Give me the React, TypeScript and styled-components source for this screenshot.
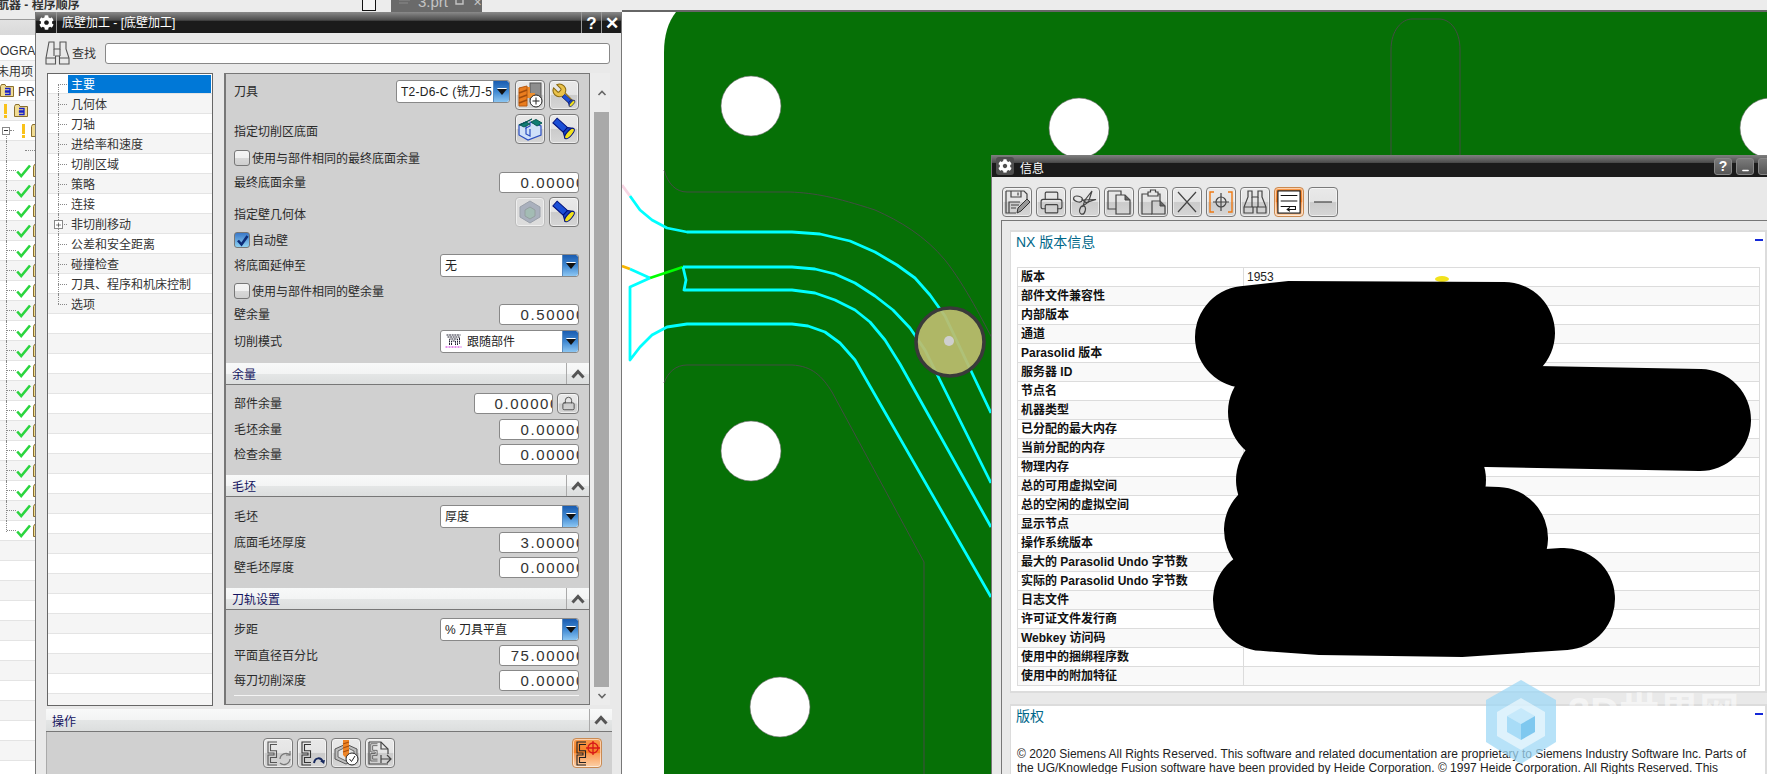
import React from "react";
import styled, { createGlobalStyle } from "styled-components";
import { FaCog } from "react-icons/fa";
import { Printer, Lock, Plus, Minus } from "lucide-react";

const Global = createGlobalStyle`
  html, body { margin: 0; padding: 0; background: #fff; overflow: hidden; }
  * { box-sizing: border-box; }
`;
const FONT = `"Liberation Sans", "Noto Sans CJK SC", sans-serif`;

const Page = styled.div`
  width: 1767px; height: 774px; overflow: hidden; display: flex; flex-direction: column;
  font-family: ${FONT}; font-size: 12px; color: #2a2a2a; background: #fff;
`;
const TopStrip = styled.div`display: flex; height: 12px; flex: none; background: #ececec;`;
const TopLeft = styled.div`width: 622px; display: flex; align-items: flex-start; overflow: hidden;`;
const TopRight = styled.div`flex: 1; border-bottom: 2px solid #666;`;
const AppTitle = styled.div`font-weight: 700; font-size: 12px; line-height: 10px; margin-left: -3px; white-space: nowrap; color: #333; width: 365px;`;
const TinySquare = styled.div`width: 14px; height: 11px; border: 1px solid #111; border-top: none; background: #f4f4f4; flex: none;`;
const PartTab = styled.div`
  margin-left: 15px; width: 91px; height: 12px; background: #6a6a6a; color: #c4c4c4; display: flex; flex: none;
  align-items: flex-start; padding-left: 7px; font-size: 15px; line-height: 4px; overflow: hidden;
`;
const TabName = styled.span`margin: 0 7px 0 5px;`;
const TabClose = styled.span`margin-left: 8px; font-size: 11px; line-height: 5px;`;
const Work = styled.div`flex: 1; display: flex; min-height: 0;`;

/* ---------- navigator ---------- */
const Nav = styled.div`width: 35px; flex: none; overflow: hidden; background: #fff;`;
const NavHead = styled.div`
  height: 29px; background: linear-gradient(#ececec 0, #ececec 7px, #999 7px, #999 8px, #e2e2e2 8px, #d9d9d9 23px, #fff 23px);
`;
const NavRow = styled.div<{ $alt: boolean; $pad?: number; $tree?: boolean; $first?: boolean; $last?: boolean; $gap?: number }>`
  height: 20px; display: flex; align-items: center; white-space: nowrap; position: relative;
  padding-left: ${(p) => p.$pad ?? 0}px; gap: ${(p) => p.$gap ?? 0}px;
  background: ${(p) => (p.$alt ? "#f5f5f5" : "#fff")};
  border-bottom: 1px solid #e4e4e4; color: #333;
  ${(p) => (p.$tree ? `&::after { content: ""; position: absolute; left: 6px; top: ${p.$first ? 10 : 0}px; height: ${p.$last ? 11 : 20}px; border-left: 1px dotted #888; }` : "")}
`;
const NavClip = styled.span`margin-left: -3px;`;
const NavDown = styled.span`padding-top: 3px;`;
const NavGap = styled.span<{ $w: number }>`display: block; width: ${(p) => p.$w}px; flex: none;`;
const NavDash = styled.i<{ $w: number }>`display: block; width: ${(p) => p.$w}px; flex: none; border-top: 1px dotted #888;`;
const Warn = styled.i`display: block; width: 3px; height: 14px; flex: none; background: linear-gradient(#f9c21a 0, #f9c21a 72%, transparent 72%, transparent 80%, #f9c21a 80%);`;
const NavBox = styled.i`display: flex; width: 8px; height: 8px; border: 1px solid #888; background: #fff; flex: none; align-items: center; justify-content: center; position: relative; z-index: 1;`;
const NavBoxBar = styled.i`display: block; width: 4px; height: 1px; background: #333;`;
const PlainSvg = styled.svg`flex: none; display: block;`;

const Folder = () => (
  <PlainSvg width="14" height="13" viewBox="0 0 14 13">
    <path d="M.5 2.5V12.5H13.5V2.5H6L5 .5H1.5Z" fill="#f1dc93" stroke="#8a6f2c" />
    <path d="M5 4.5H10V6.8H5.5V8.2H10V10.5H5" fill="none" stroke="#1720c8" strokeWidth="1.3" />
  </PlainSvg>
);
const Check = () => (
  <PlainSvg width="15" height="14" viewBox="0 0 15 14">
    <path d="M1.2 7.5 L5.2 12 L14 1.5" fill="none" stroke="#2bd53f" strokeWidth="2.6" />
  </PlainSvg>
);

const Navigator = () => {
  const rows: React.ReactNode[] = [];
  for (let i = 0; i < 37; i++) {
    const alt = i % 2 === 1;
    if (i === 0) rows.push(<NavRow key={i} $alt={alt}>OGRA</NavRow>);
    else if (i === 1) rows.push(<NavRow key={i} $alt={alt}><NavClip>未用项</NavClip></NavRow>);
    else if (i === 2) rows.push(<NavRow key={i} $alt={alt} $gap={4}><Folder /><NavDown>PRO</NavDown></NavRow>);
    else if (i === 3) rows.push(<NavRow key={i} $alt={alt} $pad={4} $gap={7}><Warn /><Folder /><span>C</span></NavRow>);
    else if (i === 4) rows.push(<NavRow key={i} $alt={alt} $pad={2} $tree $first><NavBox><NavBoxBar /></NavBox><NavDash $w={4} /><NavGap $w={8} /><Warn /><NavGap $w={6} /><Folder /></NavRow>);
    else if (i === 5) rows.push(<NavRow key={i} $alt={alt} $pad={25} $tree><NavDash $w={10} /></NavRow>);
    else if (i >= 6 && i <= 24) rows.push(<NavRow key={i} $alt={alt} $pad={7} $tree $last={i === 24}><NavDash $w={9} /><Check /><NavGap $w={2} /><Folder /></NavRow>);
    else rows.push(<NavRow key={i} $alt={alt} />);
  }
  return <Nav><NavHead />{rows}</Nav>;
};

/* ---------- dialog shell ---------- */
const Dialog = styled.div`
  width: 587px; flex: none; background: #e9e9e9; border-left: 1px solid #777; border-right: 1px solid #777;
  display: flex; flex-direction: column; overflow: hidden;
`;
const TitleBar = styled.div<{ $h: number }>`
  height: ${(p) => p.$h}px; flex: none; display: flex; align-items: stretch; color: #fff;
  background: linear-gradient(#8a8a8a 0, #4a4a4a 40%, #1b1b1b 42%, #1b1b1b 100%);
`;
const TitleGear = styled.div`width: 21px; display: flex; align-items: center; justify-content: center; border-right: 1px solid #999; flex: none;`;
const TitleText = styled.div`flex: 1; padding: 4px 0 0 5px; font-size: 12px; line-height: 15px;`;
const TitleBtn = styled.div`
  width: 20px; display: flex; align-items: center; justify-content: center; border-left: 1px solid #999;
  font-size: 17px; font-weight: 700; color: #fff; flex: none; padding-top: 2px;
`;
const FindRow = styled.div`height: 40px; flex: none; display: flex; align-items: center; padding: 0 11px 0 9px;`;
const FindLabel = styled.span`margin: 0 9px 2px 2px; font-size: 12px; color: #333;`;
const FindInput = styled.div`flex: 1; height: 21px; background: #fff; border: 1px solid #888; border-radius: 3px;`;
const MainRow = styled.div`height: 633px; flex: none; display: flex; padding-left: 11px; gap: 11px;`;

const Tree = styled.div`width: 166px; flex: none; height: 633px; border: 1px solid #666; background: #f5f5f5; overflow: hidden;`;
const TreeRow = styled.div<{ $alt: boolean; $item: boolean; $first?: boolean; $last?: boolean }>`
  height: 20px; position: relative; padding-left: 20px; display: flex;
  background: ${(p) => (p.$alt ? "#f5f5f5" : "#fff")}; border-bottom: 1px solid #e4e4e4;
  ${(p) => p.$item ? `
    &::before { content: ""; position: absolute; left: 10px; top: 10px; width: 9px; border-top: 1px dotted #888; }
    &::after { content: ""; position: absolute; left: 10px; top: ${p.$first ? 10 : 0}px; height: ${p.$last ? 10 : 20}px; border-left: 1px dotted #888; }
  ` : ""}
`;
const TreeLabel = styled.div<{ $sel?: boolean }>`
  flex: 1; padding: ${(p) => (p.$sel ? "2px" : "3px")} 0 0 3px; line-height: 16px; margin: ${(p) => (p.$sel ? "1px 1px 0 0" : "0")};
  height: ${(p) => (p.$sel ? "18px" : "19px")};
  background: ${(p) => (p.$sel ? "#0078d7" : "transparent")}; color: ${(p) => (p.$sel ? "#fff" : "#333")};
`;
const TreeBox = styled.i`
  position: absolute; left: 6px; top: 6px; width: 9px; height: 9px; border: 1px solid #888; background: #fff;
  z-index: 1; display: flex; align-items: center; justify-content: center;
`;

const Panes = styled.div`width: 386px; flex: none; display: flex;`;
const Pane = styled.div`
  width: 366px; height: 632px; background: #d0d0d0; border: 1px solid #777; border-width: 1px 1px 1px 2px; overflow: hidden;
`;
const ScrollTrack = styled.div`width: 20px; height: 632px; background: #ececec; display: flex; flex-direction: column; align-items: center; padding-left: 3px;`;
const ScrollCap = styled.div<{ $h: number }>`height: ${(p) => p.$h}px; flex: none; display: flex; align-items: center; justify-content: center; color: #555;`;
const ScrollThumb = styled.div`flex: 1; width: 15px; background: #a9a9a9;`;

const SectionHead = styled.div<{ $h?: number }>`
  height: ${(p) => p.$h ?? 22}px; flex: none; display: flex; align-items: center; justify-content: space-between;
  background: linear-gradient(#f8f9f9 0, #f3f4f4 50%, #e4e6e6 52%, #dcdede 100%); border-bottom: 1px solid #777;
  color: #14145f; padding-left: 6px; font-size: 12px;
`;
const Chevron = styled.div`
  width: 23px; height: 100%; border-left: 1px solid #aaa; display: flex; align-items: center; justify-content: center; color: #555; flex: none;
`;
const SectionBody = styled.div<{ $h: number }>`height: ${(p) => p.$h}px; padding: 0 10px 0 8px; display: flex; flex-direction: column;`;
const FormRow = styled.div<{ $h: number; $mt: number }>`
  height: ${(p) => p.$h}px; margin-top: ${(p) => p.$mt}px; display: flex; align-items: center; justify-content: space-between; flex: none; gap: 4px;
`;
const TopRow = styled(FormRow)`align-items: flex-start;`;
const Label = styled.span<{ $lift?: number }>`color: #2a2a2a; white-space: nowrap; margin-bottom: 2px; ${(p) => (p.$lift ? `margin-top: ${p.$lift}px;` : "")}`;
const Group = styled.div`display: flex; gap: 4px; align-items: flex-start;`;

const CheckWrap = styled.div`display: flex; align-items: center; gap: 2px; color: #2a2a2a;`;
const CheckText = styled.span`margin-bottom: 2px;`;
const CheckBox = styled.div<{ $on?: boolean }>`
  width: 16px; height: 16px; border: 1px solid #777; border-radius: 3px; display: flex; align-items: center; justify-content: center; flex: none;
  background: ${(p) => (p.$on ? "linear-gradient(#3a78c8, #8fd2f2)" : "linear-gradient(#f4f4f4, #f0f0f0 50%, #d8d8d8 52%, #cfcfcf)")};
`;
const InputBox = styled.div<{ $w?: number }>`
  width: ${(p) => p.$w ?? 80}px; height: 21px; background: #fff; border: 1px solid #888; border-radius: 3px; overflow: hidden;
  display: flex; justify-content: flex-end; align-items: center; flex: none;
`;
const InputText = styled.span`font-size: 15px; letter-spacing: 1.6px; margin-right: -8px; color: #333; white-space: nowrap; font-weight: 400; line-height: 19px;`;
const Select = styled.div<{ $w: number }>`
  width: ${(p) => p.$w}px; height: 23px; background: #fff; border: 1px solid #888; border-radius: 3px; display: flex; align-items: center;
  justify-content: space-between; overflow: hidden; flex: none;
`;
const SelectText = styled.span<{ $sp?: number }>`padding: 0 0 2px 4px; color: #222; white-space: nowrap; overflow: hidden; display: flex; align-items: center; gap: 5px; letter-spacing: ${(p) => p.$sp ?? 0}px;`;
const SelectArrow = styled.div`
  width: 16px; height: 100%; flex: none; background: linear-gradient(#1a5cb0, #3f88d2 50%, #8cc6f2); border-left: 1px solid #5a8cc0;
  display: flex; align-items: center; justify-content: center; border-radius: 0 2px 2px 0;
`;
const Arrow = styled.i`display: block; width: 0; height: 0; border-left: 5px solid transparent; border-right: 5px solid transparent; border-top: 6px solid #111; filter: drop-shadow(0 -1px 0 #fff);`;
const IconBtn = styled.div<{ $s?: number; $orange?: boolean; $off?: boolean; $h?: number }>`
  width: ${(p) => p.$s ?? 30}px; height: ${(p) => p.$h ?? p.$s ?? 30}px; flex: none; border-radius: 4px;
  border: 1.5px solid ${(p) => (p.$off ? "#bdbdbd" : p.$orange ? "#c98a52" : "#7a7a7a")};
  display: flex; align-items: center; justify-content: center;
  background: ${(p) => p.$orange
    ? "linear-gradient(#f99a4c, #f77f22 50%, #fb9a50 52%, #fcd0a8)"
    : p.$off ? "#dcdcdc"
    : "linear-gradient(#e9e9e9, #e4e4e4 48%, #cbcbcb 52%, #d6d6d6)"};
  box-shadow: inset 0 0 0 1px rgba(255,255,255,.55);
`;
const ToolBtn = styled(IconBtn)`margin-left: 1px;`;
const EndRule = styled.div`height: 1px; background: #f4f4f4; margin-top: 4px; flex: none;`;

const OpWrap = styled.div`margin: 3px 0 0 10px; width: 566px; flex: 1; display: flex; flex-direction: column; min-height: 0;`;
const OpBody = styled.div`flex: 1; background: #d0d0d0; border-left: 1px solid #aaa; display: flex; gap: 4px; padding: 6px 10px 0 216px;`;
const OpSpacer = styled.div`flex: 1;`;

/* ---------- canvas + info ---------- */
const CanvasArea = styled.div`flex: 1; position: relative; overflow: hidden; background: #fff;`;
const CanvasSvg = styled.svg`display: block; width: 1145px; height: 762px;`;
const Info = styled.div`
  position: absolute; left: 369px; top: 143px; width: 776px; height: 619px; background: #e9e9e9; display: flex; flex-direction: column; overflow: hidden;
  border-left: 1px solid #777;
`;
const InfoTitle = styled.div`
  height: 22px; flex: none; display: flex; align-items: center; color: #fff; padding-left: 4px; gap: 6px; font-size: 12px;
  background: linear-gradient(#808080 0, #4d4d4d 34%, #1b1b1b 36%, #1b1b1b 100%);
`;
const InfoGear = styled.div`width: 18px; height: 18px; border-radius: 3px; background: #4f4f4f; display: flex; align-items: center; justify-content: center; flex: none;`;
const InfoTitleText = styled.span`flex: 1; padding-top: 3px;`;
const InfoCtl = styled.div`
  width: 18px; height: 17px; border-radius: 3px; background: linear-gradient(#7a7a7a, #555); border: 1px solid #888; color: #fff; font-weight: 700; font-size: 14px;
  display: flex; align-items: flex-end; justify-content: center; flex: none;
`;
const InfoCtls = styled.div`display: flex; gap: 4px; margin-right: -9px;`;
const InfoTools = styled.div`height: 43px; flex: none; display: flex; gap: 4px; padding: 10px 0 0 10px;`;
const InfoFrame = styled.div`flex: 1; margin-left: 9px; border: 1px solid #777; border-width: 1px 0 0 1px; padding: 9px 0 0 8px; display: flex; flex-direction: column; gap: 11px; min-height: 0;`;
const InfoPanel = styled.div<{ $h?: number }>`
  background: #fff; border: 1px solid #dcdcdc; border-width: 2px 2px 2px 1px; padding: 0 0 0 5px; position: relative; flex: none;
  ${(p) => (p.$h ? `height: ${p.$h}px;` : "")} overflow: hidden;
`;
const PanelHead = styled.div`color: #00678a; font-size: 14px; line-height: 18px; padding-top: 1px; height: 35px;`;
const Collapse = styled.i`position: absolute; right: 2px; top: 7px; width: 8px; height: 2px; background: #1428d8;`;
const InfoTable = styled.table`border-collapse: collapse; width: 743px; margin-left: 1px; table-layout: fixed;`;
const Tr = styled.tr<{ $alt: boolean }>`background: ${(p) => (p.$alt ? "#f9f9f9" : "#fff")};`;
const Th = styled.td`width: 226px; height: 19px; padding: 0 0 0 3px; border: 1px solid #dcdcdc; font-weight: 700; color: #111; font-size: 12px; line-height: 17px; white-space: nowrap;`;
const Td = styled.td`padding: 0 0 0 3px; border: 1px solid #dcdcdc; color: #222; font-size: 12px; line-height: 17px;`;
const Legal = styled.p`margin: 6px 0 0; padding: 0 0 0 1px; width: 742px; font-size: 12px; line-height: 14px; color: #222;`;
const Overlay = styled.svg`position: absolute; left: 0; top: 0; width: 776px; height: 619px; pointer-events: none;`;
const WaterText = styled.div`position: absolute; left: 576px; top: 525px; font-size: 40px; font-weight: 700; color: rgba(255,255,255,.55); white-space: nowrap; pointer-events: none;`;
const MinBar = styled(Minus)`margin-bottom: -1px;`;

/* ---------- icons ---------- */
const S = { fill: "none", stroke: "#444", strokeWidth: 1.2 } as const;
const Ico = ({ children, s = 26 }: { children: React.ReactNode; s?: number }) => (
  <svg width={s} height={s} viewBox="0 0 26 26">{children}</svg>
);
const Flash = () => (
  <g transform="translate(4 4.5) rotate(42)" stroke="#00107a" strokeWidth="1">
    <rect x="0" y="-3.2" width="14" height="6.4" fill="#1b4fd6" />
    <path d="M14-3.2 L19-6.5 V6.5 L14 3.2Z" fill="#1740c0" />
    <ellipse cx="19.5" cy="0" rx="2.6" ry="6.5" fill="#f2e21c" />
  </g>
);
const IconFlash = () => <Ico><Flash /></Ico>;
const IconTool = () => (
  <Ico>
    <rect x="13" y="1" width="11" height="16" fill="#8e8e8e" stroke="#555" />
    <path d="M8 5h5v11H8Z" fill="#ec8a2a" />
    <path d="M2 6l8-2v20H2Z" fill="#ea7d1e" stroke="#b85a10" />
    <path d="M2 11l8-3M2 16l8-3M2 21l8-3" stroke="#a04c0c" strokeWidth="1.4" />
    <rect x="11" y="11" width="7" height="5" fill="#ee9030" />
    <circle cx="19" cy="19" r="6" fill="#fff" stroke="#222" />
    <path d="M19 15.5v7M15.5 19h7" stroke="#222" />
  </Ico>
);
const IconWrench = () => (
  <Ico>
    <g transform="translate(0 0) scale(1.05)">
      <path d="M14.7 6.3a1 1 0 0 0 0 1.4l1.6 1.6a1 1 0 0 0 1.4 0l3.77-3.77a6 6 0 0 1-7.94 7.94l-6.91 6.91a2.12 2.12 0 0 1-3-3l6.91-6.91a6 6 0 0 1 7.94-7.94l-3.76 3.76z" fill="#eac24a" stroke="#8a6a10" transform="translate(24 0) scale(-1 1)" />
    </g>
    <g transform="translate(10 11) scale(.6)"><Flash /></g>
  </Ico>
);
const IconFace = () => (
  <Ico>
    <path d="M2 9 L9 6 V12 L13 10 V6 L24 10 V19 L11 24 L2 19Z" fill="#cfe0f8" stroke="#2a4ec0" strokeWidth="1.2" />
    <path d="M2 9 L9 6 L15 3 L8 6.5ZM3 9 L9 6 L13 8 L7 11Z" fill="#0f7d74" stroke="#0a5a55" />
    <path d="M14 6 L19 3.5 L25 7 L20 10Z" fill="#0f7d74" stroke="#0a5a55" />
    <path d="M9 12 V18 L13 20 V13" fill="none" strokeWidth="1.2" stroke="#2a4ec0" />
  </Ico>
);
const IconHex = () => (
  <Ico>
    <path d="M13 2 L23 8 V18 L13 24 L3 18 V8Z" fill="#a9b0bd" stroke="#9aa0aa" />
    <path d="M8 17V11l5-3 5 3v6l-5 3Z" fill="#a3bcb4" stroke="#95a0a0" />
  </Ico>
);
const Zig = ({ c = "#555" }: { c?: string }) => (
  <g fill="none" stroke={c} strokeWidth="1.1">
    <path d="M12 2H3V13H9V15H3V25H12" />
    <path d="M12 4.5H5.5V10.8H11.5V17.5H5.5V22.5H12" />
  </g>
);
const IconRegen = () => (
  <Ico><Zig /><path d="M15 19a6 6 0 0 1 10-4M25 19a6 6 0 0 1-10 4" fill="none" strokeWidth="1.2" stroke="#777" /><path d="M25 11v4h-4" fill="none" strokeWidth="1.2" stroke="#777" /></Ico>
);
const IconReplay = () => (
  <Ico><Zig c="#333" /><path d="M15 23c1-6 7-6 9-1" fill="none" stroke="#16285e" strokeWidth="2" /><path d="M21 21l4 3 1-4Z" fill="#16285e" /></Ico>
);
const IconVerify = () => (
  <Ico>
    <path d="M2 9 L13 4 L24 9 V19 L13 24 L2 19Z" fill="#bdbdbd" stroke="#555" />
    <path d="M5 11 L13 7 L21 11 V17 L13 21 L5 17Z" fill="#e4e4e4" stroke="#666" />
    <path d="M10 0h6v15l-3 3-3-3Z" fill="#ee8426" />
    <path d="M10 4l6-2M10 8l6-2M10 12l6-2" stroke="#a94f0c" strokeWidth="1.3" />
    <circle cx="19" cy="19" r="6" fill="#fff" stroke="#222" />
    <path d="M16.5 19l2 2.5 3.5-5.5" fill="none" stroke="#222" />
  </Ico>
);
const IconList = () => (
  <Ico>
    <path d="M2 2H14L21 9V14M21 24H2V2" {...S} /><path d="M14 2V9H21" {...S} />
    <g transform="scale(.75) translate(2 3)"><Zig /></g>
    <path d="M14 19H24M20 15l4 4-4 4M14 15v8" {...S} />
  </Ico>
);
const IconSeq = () => (
  <Ico>
    <Zig c="#222" />
    <circle cx="19" cy="8" r="5" fill="none" stroke="#d81818" strokeWidth="1.3" />
    <path d="M19 1v14M12 8h14" stroke="#d81818" strokeWidth="1.3" />
  </Ico>
);
const IconSave = () => (
  <Ico>
    <path d="M2 2H20L23 5V12M12 24H2V2" {...S} /><path d="M7 2V8H17V2M14 3.5V6.5" {...S} /><path d="M5 24V13H16" {...S} />
    <path d="M7 16h8M7 19h5" {...S} />
    <path d="M13 24l1-5 9-9 3 3-9 9Z" fill="#999" stroke="#333" />
  </Ico>
);
const IconScissors = () => (
  <Ico>
    <ellipse cx="6" cy="10" rx="4.5" ry="2.8" transform="rotate(15 6 10)" {...S} />
    <ellipse cx="10.5" cy="21" rx="2.8" ry="4.2" transform="rotate(15 10.5 21)" {...S} />
    <path d="M10.5 11L24 10.5L14 13.5Z" {...S} />
    <path d="M11 17L13 11L20 2L16.5 13Z" {...S} />
  </Ico>
);
const IconCopy = () => (
  <Ico><path d="M2 2H15V6M2 2V20H10" {...S} /><path d="M10 6H19L24 11V25H10Z" {...S} /><path d="M19 6V11H24" fill="#666" stroke="#444" /></Ico>
);
const IconPaste = () => (
  <Ico><path d="M8 5H2V25H12M18 5H20V12" {...S} /><path d="M8 7V3H10.5V1H15.5V3H18V7Z" {...S} /><path d="M12 12H20L25 17V25H12Z" {...S} /><path d="M20 12V17H25" fill="#666" stroke="#444" /></Ico>
);
const IconX = () => <Ico><path d="M4 3L22 23M22 3L4 23" {...S} /></Ico>;
const IconFit = () => (
  <Ico>
    <path d="M6 3H2V23H6M20 3H24V23H20" fill="none" stroke="#ee7a14" strokeWidth="1.4" />
    <circle cx="13" cy="13" r="5" {...S} /><path d="M13 4V22M5 13H21" {...S} />
  </Ico>
);
const IconBino = () => (
  <Ico>
    <path d="M6 2H10V8H16V2H20V8L24 18V24H15V18H11V24H2V18L6 8Z" {...S} /><path d="M2 18H11M15 18H24M10 8V18M16 8V18" {...S} />
  </Ico>
);
const IconWrap = () => (
  <Ico s={24}>
    <rect x="1" y="1" width="24" height="24" fill="#fff" stroke="#111" strokeWidth="1.2" />
    <path d="M4 6H22M4 12H22M4 18H20V21H12M14 19l-3 2 3 2" fill="none" stroke="#111" strokeWidth="1.1" />
  </Ico>
);
const IconDash = () => <Ico><path d="M4 13H22" {...S} /></Ico>;
const Binoculars = () => (
  <svg width="25" height="24" viewBox="0 0 25 24">
    <path d="M4 1H9V8H15V1H21V8L24 17V23H14.5V15H10.5V23H1V17Z" fill="none" stroke="#555" strokeWidth="1.1" />
    <path d="M1 17H10.5M14.5 17H24M9 8V15M15 8V15" fill="none" stroke="#555" strokeWidth="1.1" />
  </svg>
);
const Up = () => (
  <svg width="18" height="14" viewBox="0 0 18 14"><path d="M3.5 10.5L9 4.5L14.5 10.5" fill="none" stroke="#555" strokeWidth="3" /></svg>
);
const SmallUp = () => (<svg width="10" height="8" viewBox="0 0 10 8"><path d="M1.5 6L5 2.5L8.5 6" fill="none" stroke="#666" strokeWidth="1.6" /></svg>);
const SmallDown = () => (<svg width="10" height="8" viewBox="0 0 10 8"><path d="M1.5 2L5 5.5L8.5 2" fill="none" stroke="#666" strokeWidth="1.6" /></svg>);
const TickMark = () => (<svg width="13" height="13" viewBox="0 0 13 13"><path d="M2 6.5L5.5 10.5L11.5 2" fill="none" stroke="#0c2c78" strokeWidth="2.6" /></svg>);
const FollowIcon = () => (
  <PlainSvg width="17" height="15" viewBox="0 0 16 15">
    <path d="M1 2H15M2 4H14V11M4 12V6H12V12M6 12V8H10V12" fill="none" stroke="#223" strokeWidth="1" strokeDasharray="2 .6" />
    <path d="M0 14H16" stroke="#c820d8" strokeWidth="1" strokeDasharray="2 1" />
  </PlainSvg>
);
const TabGlyph = () => (
  <PlainSvg width="15" height="6" viewBox="0 0 15 6"><path d="M1 0H12M1 3H10" stroke="#8a8a8a" fill="none" /></PlainSvg>
);
const PinGlyph = () => (
  <PlainSvg width="10" height="6" viewBox="0 0 10 6"><path d="M1 0V4H8V0" stroke="#c4c4c4" fill="none" strokeWidth="1.4" /></PlainSvg>
);

/* ---------- small composites ---------- */
const Field = ({ v, w }: { v: string; w?: number }) => <InputBox $w={w}><InputText>{v}</InputText></InputBox>;
const Drop = ({ w, text, sp, icon }: { w: number; text: string; sp?: number; icon?: boolean }) => (
  <Select $w={w}>
    <SelectText $sp={sp}>{icon && <FollowIcon />}{text}</SelectText>
    <SelectArrow><Arrow /></SelectArrow>
  </Select>
);
const CheckLine = ({ on, text }: { on?: boolean; text: string }) => (
  <CheckWrap><CheckBox $on={on}>{on && <TickMark />}</CheckBox><CheckText>{text}</CheckText></CheckWrap>
);
const Head = ({ t, h }: { t: string; h?: number }) => (
  <SectionHead $h={h}><span>{t}</span><Chevron><Up /></Chevron></SectionHead>
);

const treeItems = ["主要", "几何体", "刀轴", "进给率和速度", "切削区域", "策略", "连接", "非切削移动", "公差和安全距离", "碰撞检查", "刀具、程序和机床控制", "选项"];

const TreePane = () => (
  <Tree>
    {Array.from({ length: 32 }, (_, i) => {
      const t = treeItems[i];
      return (
        <TreeRow key={i} $alt={i % 2 === 1} $item={!!t} $first={i === 0} $last={i === treeItems.length - 1}>
          {i === 7 && <TreeBox><Plus size={8} strokeWidth={2} color="#222" /></TreeBox>}
          {t && <TreeLabel $sel={i === 0}>{t}</TreeLabel>}
        </TreeRow>
      );
    })}
  </Tree>
);

const FormPane = () => (
  <Pane>
    <SectionBody $h={289}>
      <TopRow $h={30} $mt={6}>
        <Label $lift={2}>刀具</Label>
        <Group><Drop w={114} text="T2-D6-C (铣刀-5" sp={.25} /><ToolBtn><IconTool /></ToolBtn><IconBtn><IconWrench /></IconBtn></Group>
      </TopRow>
      <FormRow $h={30} $mt={4}>
        <Label $lift={4}>指定切削区底面</Label>
        <Group><IconBtn><IconFace /></IconBtn><IconBtn><IconFlash /></IconBtn></Group>
      </FormRow>
      <FormRow $h={16} $mt={6}><CheckLine text="使用与部件相同的最终底面余量" /></FormRow>
      <FormRow $h={21} $mt={6}><Label>最终底面余量</Label><Field v="0.00000" /></FormRow>
      <FormRow $h={30} $mt={4}>
        <Label $lift={4}>指定壁几何体</Label>
        <Group><IconBtn $off><IconHex /></IconBtn><IconBtn><IconFlash /></IconBtn></Group>
      </FormRow>
      <FormRow $h={16} $mt={5}><CheckLine on text="自动壁" /></FormRow>
      <FormRow $h={23} $mt={6}><Label>将底面延伸至</Label><Drop w={139} text="无" /></FormRow>
      <FormRow $h={16} $mt={6}><CheckLine text="使用与部件相同的壁余量" /></FormRow>
      <FormRow $h={21} $mt={5}><Label>壁余量</Label><Field v="0.50000" /></FormRow>
      <FormRow $h={23} $mt={5}><Label>切削模式</Label><Drop w={139} text="跟随部件" icon /></FormRow>
    </SectionBody>
    <Head t="余量" />
    <SectionBody $h={90}>
      <FormRow $h={21} $mt={8}>
        <Label>部件余量</Label>
        <Group><Field v="0.00000" w={79} /><IconBtn $s={22} $h={21}><Lock size={15} color="#444" strokeWidth={1.4} /></IconBtn></Group>
      </FormRow>
      <FormRow $h={21} $mt={5}><Label>毛坯余量</Label><Field v="0.00000" /></FormRow>
      <FormRow $h={21} $mt={4}><Label>检查余量</Label><Field v="0.00000" /></FormRow>
    </SectionBody>
    <Head t="毛坯" />
    <SectionBody $h={91}>
      <FormRow $h={23} $mt={8}><Label>毛坯</Label><Drop w={139} text="厚度" /></FormRow>
      <FormRow $h={21} $mt={4}><Label>底面毛坯厚度</Label><Field v="3.00000" /></FormRow>
      <FormRow $h={21} $mt={4}><Label>壁毛坯厚度</Label><Field v="0.00000" /></FormRow>
    </SectionBody>
    <Head t="刀轨设置" />
    <SectionBody $h={94}>
      <FormRow $h={23} $mt={8}><Label>步距</Label><Drop w={139} text="% 刀具平直" /></FormRow>
      <FormRow $h={21} $mt={4}><Label>平面直径百分比</Label><Field v="75.00000" /></FormRow>
      <FormRow $h={21} $mt={4}><Label>每刀切削深度</Label><Field v="0.00000" /></FormRow>
      <EndRule />
    </SectionBody>
  </Pane>
);

const Machining = () => (
  <Dialog>
    <TitleBar $h={21}>
      <TitleGear><FaCog size={15} color="#fff" /></TitleGear>
      <TitleText>底壁加工 - [底壁加工]</TitleText>
      <TitleBtn>?</TitleBtn>
      <TitleBtn>✕</TitleBtn>
    </TitleBar>
    <FindRow><Binoculars /><FindLabel>查找</FindLabel><FindInput /></FindRow>
    <MainRow>
      <TreePane />
      <Panes>
        <FormPane />
        <ScrollTrack>
          <ScrollCap $h={39}><SmallUp /></ScrollCap>
          <ScrollThumb />
          <ScrollCap $h={18}><SmallDown /></ScrollCap>
        </ScrollTrack>
      </Panes>
    </MainRow>
    <OpWrap>
      <SectionHead $h={23}><span>操作</span><Chevron><Up /></Chevron></SectionHead>
      <OpBody>
        <IconBtn><IconRegen /></IconBtn>
        <IconBtn><IconReplay /></IconBtn>
        <IconBtn><IconVerify /></IconBtn>
        <IconBtn><IconList /></IconBtn>
        <OpSpacer />
        <IconBtn $orange><IconSeq /></IconBtn>
      </OpBody>
    </OpWrap>
  </Dialog>
);

const infoRows = ["版本", "部件文件兼容性", "内部版本", "通道", "Parasolid 版本", "服务器 ID", "节点名", "机器类型", "已分配的最大内存", "当前分配的内存", "物理内存", "总的可用虚拟空间", "总的空闲的虚拟空间", "显示节点", "操作系统版本", "最大的 Parasolid Undo 字节数", "实际的 Parasolid Undo 字节数", "日志文件", "许可证文件发行商", "Webkey 访问码", "使用中的捆绑程序数", "使用中的附加特征"];

const InfoWindow = () => (
  <Info>
    <InfoTitle>
      <InfoGear><FaCog size={14} color="#fff" /></InfoGear>
      <InfoTitleText>信息</InfoTitleText>
      <InfoCtls>
        <InfoCtl>?</InfoCtl>
        <InfoCtl><MinBar size={9} strokeWidth={4} /></InfoCtl>
        <InfoCtl />
      </InfoCtls>
    </InfoTitle>
    <InfoTools>
      <IconBtn><IconSave /></IconBtn>
      <IconBtn><Printer size={25} strokeWidth={1.1} color="#444" /></IconBtn>
      <IconBtn><IconScissors /></IconBtn>
      <IconBtn><IconCopy /></IconBtn>
      <IconBtn><IconPaste /></IconBtn>
      <IconBtn><IconX /></IconBtn>
      <IconBtn><IconFit /></IconBtn>
      <IconBtn><IconBino /></IconBtn>
      <IconBtn $orange><IconWrap /></IconBtn>
      <IconBtn><IconDash /></IconBtn>
    </InfoTools>
    <InfoFrame>
      <InfoPanel $h={463}>
        <PanelHead>NX 版本信息</PanelHead>
        <Collapse />
        <InfoTable>
          <tbody>
            {infoRows.map((r, i) => (
              <Tr key={r} $alt={i % 2 === 1}><Th>{r}</Th><Td>{i === 0 ? "1953" : ""}</Td></Tr>
            ))}
          </tbody>
        </InfoTable>
      </InfoPanel>
      <InfoPanel $h={90}>
        <PanelHead>版权</PanelHead>
        <Collapse />
        <Legal>© 2020 Siemens All Rights Reserved. This software and related documentation are proprietary to Siemens Industry Software Inc. Parts of the UG/Knowledge Fusion software have been provided by Heide Corporation. © 1997 Heide Corporation. All Rights Reserved. This</Legal>
      </InfoPanel>
    </InfoFrame>
    <WaterText>3D世界网</WaterText>
    <Overlay viewBox="991 155 776 619">
      <ellipse cx="1441" cy="279" rx="7" ry="3" fill="#f2e21c" />
      <g fill="none" stroke="#000" strokeWidth="102" strokeLinecap="round">
        <path d="M1245 337L1290 332L1503 333" />
        <path d="M1278 412L1699 420" />
        <path d="M1286 480L1434 480" />
        <path d="M1274 530L1496 538" />
        <path d="M1263 600L1320 604L1460 606L1563 599" />
        <path d="M1345 340V600" />
      </g>
      <g transform="translate(1520 722)">
        <path d="M0-42 L35-22 V20 L0 42 L-35 20 V-22Z" fill="#9fd8f5" fillOpacity=".75" />
        <path d="M0-24 L24-10 V14 L0 28 L-24 14 V-10Z" fill="#fff" fillOpacity=".55" />
        <path d="M0-14 L14-6 L0 2 L-14-6Z" fill="#c6e9fb" />
        <path d="M-14-6 L0 2 V18 L-14 10Z" fill="#a8dcf7" />
        <path d="M14-6 L0 2 V18 L14 10Z" fill="#7fc8ef" />
      </g>
    </Overlay>
  </Info>
);

const CadCanvas = () => {
  const cyan = { fill: "none", stroke: "#00ffff", strokeWidth: 2.8, strokeLinejoin: "round" as const };
  return (
    <CanvasSvg viewBox="622 12 1145 762">
      <path d="M676 12C668 22 664 36 664 52V774H1767V12Z" fill="#067006" />
      {[[751, 106], [1079, 128], [1770, 128], [751, 451], [780, 707]].map(([x, y]) => (
        <circle key={x + "-" + y} cx={x} cy={y} r="30" fill="#fff" stroke="#666" strokeWidth=".6" />
      ))}
      <g fill="none" stroke="#4a4a4a" strokeWidth=".9">
        <path d="M1391 160V50C1391 30 1402 19 1412 19H1439C1450 19 1460 30 1460 50V160" />
        <path d="M664 170C668 184 676 192 687 192H790C815 193 835 197 875 210C900 221 925 236 945 260C965 285 985 325 993 340" />
        <path d="M664 383C668 372 676 365 687 365H792C812 366 822 376 832 392L924 562V774" />
      </g>
      <path d="M622 185L630 196" stroke="#f8d6e4" strokeWidth="2.8" />
      <path d="M622 266L630 269" stroke="#f7b500" strokeWidth="2.8" />
      <path d="M630 269L650 278" {...cyan} />
      <path d="M650 278L683 267" stroke="#00ff00" strokeWidth="2.8" />
      <path d="M630 196L640 210L652 220L667 228L687 232H792L820 234L850 241L875 252L897 265L915 278L930 295L945 316L991 413" {...cyan} />
      <path d="M683 267H792L815 269L835 274L855 283L875 296L893 310L910 328L925 350L991 483" {...cyan} />
      <path d="M683 267L686 280L684 290H792L815 293L835 300L855 310L870 322L885 340L900 364L991 527" {...cyan} />
      <path d="M650 278L630 287V360L640 347L652 335L667 327L687 324H792L808 326L825 332L840 343L855 360L991 597" {...cyan} />
      <circle cx="950" cy="342" r="34" fill="#bcbc6e" fillOpacity=".93" stroke="#3a3a3a" strokeWidth="3.6" />
      <circle cx="949" cy="341" r="5" fill="#cfcfcf" />
    </CanvasSvg>
  );
};

export default function App() {
  return (
    <Page>
      <Global />
      <TopStrip>
        <TopLeft>
          <AppTitle>航器 - 程序顺序</AppTitle>
          <TinySquare />
          <PartTab><TabGlyph /><TabName>3.prt</TabName><PinGlyph /><TabClose>✕</TabClose></PartTab>
        </TopLeft>
        <TopRight />
      </TopStrip>
      <Work>
        <Navigator />
        <Machining />
        <CanvasArea>
          <CadCanvas />
          <InfoWindow />
        </CanvasArea>
      </Work>
    </Page>
  );
}
